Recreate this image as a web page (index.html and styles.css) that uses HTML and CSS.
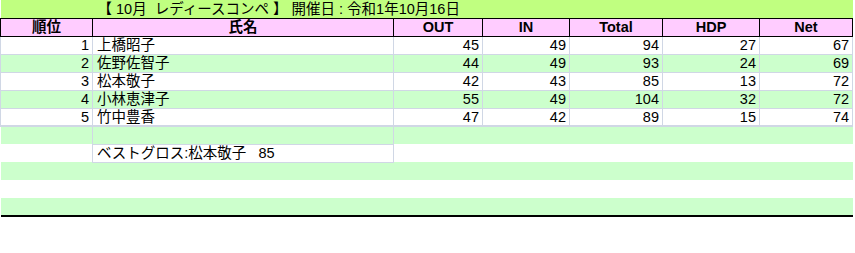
FILE: index.html
```html
<!DOCTYPE html>
<html lang="ja">
<head>
<meta charset="utf-8">
<link rel="stylesheet" href="styles.css">
</head>
<body>
<table class="sheet">
  <colgroup>
    <col class="c-rank"><col class="c-name"><col class="c-out"><col class="c-in"><col class="c-total"><col class="c-hdp"><col class="c-net">
  </colgroup>
  <tr class="title">
    <td></td>
    <td colspan="6">【 10月&nbsp; レディースコンペ 】 開催日 : 令和1年10月16日</td>
  </tr>
  <tr class="head">
    <th>順位</th><th>氏名</th><th>OUT</th><th>IN</th><th>Total</th><th>HDP</th><th>Net</th>
  </tr>
  <tr class="row">
    <td class="num">1</td><td class="name">上橋昭子</td><td class="num">45</td><td class="num">49</td><td class="num">94</td><td class="num">27</td><td class="num">67</td>
  </tr>
  <tr class="row alt">
    <td class="num">2</td><td class="name">佐野佐智子</td><td class="num">44</td><td class="num">49</td><td class="num">93</td><td class="num">24</td><td class="num">69</td>
  </tr>
  <tr class="row">
    <td class="num">3</td><td class="name">松本敬子</td><td class="num">42</td><td class="num">43</td><td class="num">85</td><td class="num">13</td><td class="num">72</td>
  </tr>
  <tr class="row alt">
    <td class="num">4</td><td class="name">小林恵津子</td><td class="num">55</td><td class="num">49</td><td class="num">104</td><td class="num">32</td><td class="num">72</td>
  </tr>
  <tr class="row last">
    <td class="num">5</td><td class="name">竹中豊香</td><td class="num">47</td><td class="num">42</td><td class="num">89</td><td class="num">15</td><td class="num">74</td>
  </tr>
  <tr class="blank alt">
    <td class="lead"></td><td class="name boxed"></td><td></td><td></td><td></td><td></td><td></td>
  </tr>
  <tr class="blank">
    <td class="lead"></td><td class="name boxed">ベストグロス:松本敬子&nbsp;&nbsp; 85</td><td></td><td></td><td></td><td></td><td></td>
  </tr>
  <tr class="blank alt">
    <td></td><td></td><td></td><td></td><td></td><td></td><td></td>
  </tr>
  <tr class="blank">
    <td></td><td></td><td></td><td></td><td></td><td></td><td></td>
  </tr>
  <tr class="blank alt end">
    <td></td><td></td><td></td><td></td><td></td><td></td><td></td>
  </tr>
</table>
</body>
</html>
```

FILE: styles.css
```css
html, body {
  margin: 0;
  padding: 0;
  background: #ffffff;
}

.sheet {
  border-collapse: collapse;
  table-layout: fixed;
  width: 852px;
  font-family: "Liberation Sans", "Noto Sans CJK JP", sans-serif;
  font-size: 14.5px;
  color: #000000;
}

.c-rank { width: 92px; }
.c-name { width: 301px; }
.c-out { width: 89px; }
.c-in { width: 87px; }
.c-total { width: 93px; }
.c-hdp { width: 97px; }
.c-net { width: 93px; }

.sheet td,
.sheet th {
  height: 18px;
  padding: 0;
  line-height: 16px;
  white-space: nowrap;
  box-sizing: border-box;
  vertical-align: middle;
}

.title td {
  background: #c0ff80;
  padding-left: 5px;
}

.head th {
  background: #ffccff;
  border: 1px solid #000000;
  font-weight: bold;
  text-align: center;
  font-size: 14.5px;
}

.row td {
  border: 1px solid #d0d7e5;
  background: #ffffff;
}

.alt td {
  background: #ccffcc;
}

.row.last td {
  border-bottom: 2px solid #d0d7e5;
}

.num {
  text-align: right;
  padding-right: 3px !important;
}

.name {
  text-align: left;
  padding-left: 4px !important;
}

.blank td {
  border: none;
}

.blank td.lead {
  border-right: 1px solid #d0d7e5;
}

.blank td.boxed {
  border-right: 1px solid #d0d7e5;
  border-bottom: 1px solid #d0d7e5;
}

.end td {
  border-bottom: 2px solid #000000;
}
```
